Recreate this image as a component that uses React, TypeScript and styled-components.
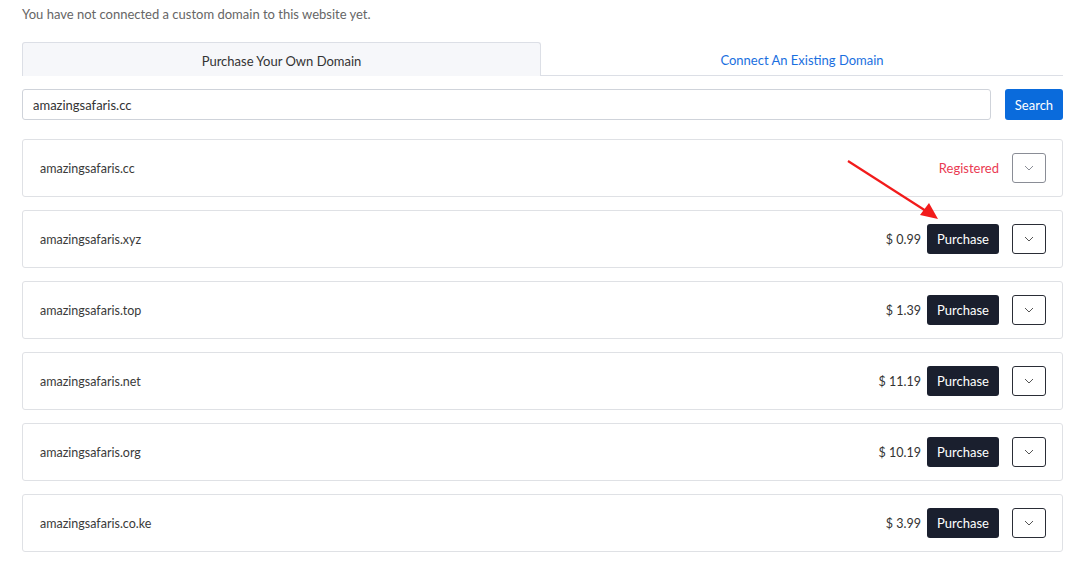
import React from "react";
import styled, { createGlobalStyle } from "styled-components";

const Global = createGlobalStyle`
  html, body { margin: 0; padding: 0; background: #fff; }
  body { font-family: Lato, "Noto Sans", sans-serif; color: #333; }
  * { box-sizing: border-box; }
`;

const Page = styled.div`
  position: relative;
  padding: 4px 16px 20px 22px;
  width: 1079px;
`;

const Notice = styled.div`
  font-size: 13px;
  color: #666;
  line-height: 20px;
  margin-bottom: 18px;
`;

const Tabs = styled.div`
  display: flex;
  border-bottom: 1px solid #dcdfe6;
  height: 34px;
`;

const Tab = styled.div<{ $active?: boolean }>`
  flex: 0 0 ${(p) => (p.$active ? "519px" : "auto")};
  flex-grow: ${(p) => (p.$active ? 0 : 1)};
  display: flex;
  align-items: center;
  justify-content: center;
  font-size: 13px;
  color: ${(p) => (p.$active ? "#333" : "#1a6fe0")};
  background: ${(p) => (p.$active ? "#f6f7fa" : "#fff")};
  border: 1px solid ${(p) => (p.$active ? "#dcdfe6" : "transparent")};
  border-bottom: none;
  border-radius: 3px 3px 0 0;
  margin-bottom: ${(p) => (p.$active ? "-1px" : "0")};
  padding-top: 2px;
`;

const SearchRow = styled.div`
  display: flex;
  gap: 14px;
  margin-top: 13px;
`;

const Input = styled.input`
  flex: 1;
  height: 31px;
  border: 1px solid #cfd3da;
  border-radius: 3px;
  padding: 0 10px;
  font-family: inherit;
  font-size: 13px;
  color: #333;
  outline: none;
`;

const SearchButton = styled.button`
  width: 58px;
  height: 31px;
  border: none;
  border-radius: 3px;
  background: #0a6bdc;
  color: #fff;
  font-family: inherit;
  font-size: 13px;
  cursor: pointer;
`;

const List = styled.div`
  display: flex;
  flex-direction: column;
  gap: 13px;
  margin-top: 19px;
`;

const Card = styled.div`
  height: 58px;
  border: 1px solid #dfe1e5;
  border-radius: 3px;
  display: flex;
  align-items: center;
  padding: 0 16px 0 17px;
`;

const Domain = styled.div`
  flex: 1;
  font-size: 12.5px;
  color: #3a3a3a;
`;

const Price = styled.span`
  font-size: 12.5px;
  color: #333;
  margin-right: 6px;
`;

const Registered = styled.span`
  font-size: 13px;
  color: #ea3b52;
`;

const BuyButton = styled.button`
  width: 72px;
  height: 30px;
  border: none;
  border-radius: 3px;
  background: #1a1f2e;
  color: #fff;
  font-family: inherit;
  font-size: 13px;
  cursor: pointer;
`;

const ToggleButton = styled.button<{ $muted?: boolean }>`
  width: 34px;
  height: 30px;
  margin-left: 13px;
  border: 1px solid ${(p) => (p.$muted ? "#8a8d96" : "#2a2d36")};
  border-radius: 3px;
  background: #fff;
  display: flex;
  align-items: center;
  justify-content: center;
  padding: 0;
  color: ${(p) => (p.$muted ? "#8a8d96" : "#555")};
`;

const ArrowOverlay = styled.svg`
  position: absolute;
  left: 0;
  top: 0;
  pointer-events: none;
`;

const Chevron = () => (
  <svg width="10" height="6" viewBox="0 0 10 6" fill="none">
    <path d="M1 1l4 4 4-4" stroke="currentColor" strokeWidth="1" />
  </svg>
);

const rows = [
  { name: "amazingsafaris.xyz", price: "$ 0.99" },
  { name: "amazingsafaris.top", price: "$ 1.39" },
  { name: "amazingsafaris.net", price: "$ 11.19" },
  { name: "amazingsafaris.org", price: "$ 10.19" },
  { name: "amazingsafaris.co.ke", price: "$ 3.99" },
];

export default function App() {
  return (
    <>
      <Global />
      <Page>
        <Notice>You have not connected a custom domain to this website yet.</Notice>
        <Tabs>
          <Tab $active>Purchase Your Own Domain</Tab>
          <Tab>Connect An Existing Domain</Tab>
        </Tabs>
        <SearchRow>
          <Input defaultValue="amazingsafaris.cc" />
          <SearchButton>Search</SearchButton>
        </SearchRow>
        <List>
          <Card>
            <Domain>amazingsafaris.cc</Domain>
            <Registered>Registered</Registered>
            <ToggleButton $muted>
              <Chevron />
            </ToggleButton>
          </Card>
          {rows.map((r) => (
            <Card key={r.name}>
              <Domain>{r.name}</Domain>
              <Price>{r.price}</Price>
              <BuyButton>Purchase</BuyButton>
              <ToggleButton>
                <Chevron />
              </ToggleButton>
            </Card>
          ))}
        </List>
        <ArrowOverlay width="1079" height="579" viewBox="0 0 1079 579">
          <line x1="848" y1="161" x2="926" y2="211" stroke="#f21b1b" strokeWidth="2.2" />
          <polygon points="938,219 920,215 929,203" fill="#f21b1b" />
        </ArrowOverlay>
      </Page>
    </>
  );
}
